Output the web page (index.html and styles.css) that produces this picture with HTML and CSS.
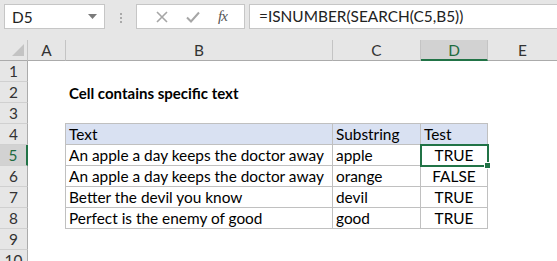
FILE: index.html
```html
<!DOCTYPE html>
<html lang="en">
<head>
  <meta charset="UTF-8">
  <title>Cell contains specific text</title>
  <link rel="stylesheet" href="styles.css">
</head>
<body>

<div class="formula-bar">
  <div class="name-box">
    <span>D5</span>
    <svg class="drop" width="9" height="5" viewBox="0 0 9 5"><path d="M0 0 H9 L4.5 5 Z" fill="#7a7a7a"/></svg>
  </div>
  <div class="grip"><i></i><i></i><i></i></div>
  <div class="fx-buttons">
    <svg width="12" height="12" viewBox="0 0 12 12"><path d="M1 1 L11 11 M11 1 L1 11" stroke="#a6a6a6" stroke-width="1.6" fill="none"/></svg>
    <svg width="14" height="12" viewBox="0 0 14 12"><path d="M1 6.5 L5 10.5 L13 1.5" stroke="#a6a6a6" stroke-width="2" fill="none"/></svg>
    <span class="fx">fx</span>
  </div>
  <div class="formula">=ISNUMBER(SEARCH(C5,B5))</div>
</div>

<div class="sheet">
  <!-- column headers -->
  <div class="corner"><span class="tri"></span></div>
  <div class="col-head">A</div>
  <div class="col-head">B</div>
  <div class="col-head">C</div>
  <div class="col-head sel">D</div>
  <div class="col-head last">E</div>

  <div class="row-head">1</div>
  <div></div><div></div><div></div><div></div><div></div>

  <div class="row-head">2</div>
  <div></div><div class="cell title">Cell contains specific text</div><div></div><div></div><div></div>

  <div class="row-head">3</div>
  <div></div><div></div><div></div><div></div><div></div>

  <div class="row-head">4</div>
  <div></div>
  <div class="cell tb th first">Text</div>
  <div class="cell tb th">Substring</div>
  <div class="cell tb th">Test</div>
  <div></div>

  <div class="row-head sel">5</div>
  <div></div>
  <div class="cell tb first">An apple a day keeps the doctor away</div>
  <div class="cell tb">apple</div>
  <div class="cell tb mid active">TRUE</div>
  <div></div>

  <div class="row-head">6</div>
  <div></div>
  <div class="cell tb first">An apple a day keeps the doctor away</div>
  <div class="cell tb">orange</div>
  <div class="cell tb mid">FALSE</div>
  <div></div>

  <div class="row-head">7</div>
  <div></div>
  <div class="cell tb first">Better the devil you know</div>
  <div class="cell tb">devil</div>
  <div class="cell tb mid">TRUE</div>
  <div></div>

  <div class="row-head">8</div>
  <div></div>
  <div class="cell tb first">Perfect is the enemy of good</div>
  <div class="cell tb">good</div>
  <div class="cell tb mid">TRUE</div>
  <div></div>

  <div class="row-head">9</div>
  <div></div><div></div><div></div><div></div><div></div>

  <div class="row-head">10</div>
  <div></div><div></div><div></div><div></div><div></div>
</div>

</body>
</html>
```

FILE: styles.css
```css
body {
  margin: 0;
  background: #fff;
  font-family: Lato, "Open Sans", sans-serif;
  font-size: 15.4px;
  color: #000;
  overflow: hidden;
}

/* formula bar */
.formula-bar {
  display: flex;
  align-items: flex-start;
  height: 40px;
  padding-top: 4px;
  box-sizing: border-box;
  background: #e6e6e6;
}

.name-box {
  display: flex;
  align-items: center;
  justify-content: space-between;
  width: 101px;
  height: 25px;
  margin-left: 4px;
  padding: 0 7px 0 7px;
  box-sizing: border-box;
  background: #fff;
  border: 1px solid #c6c6c6;
  color: #222;
}

.grip {
  display: flex;
  flex-direction: column;
  gap: 2px;
  margin: 9px 14px 0 15px;
}

.grip i {
  width: 2px;
  height: 2px;
  background: #a9a9a9;
}

.fx-buttons {
  display: flex;
  align-items: center;
  justify-content: space-around;
  width: 109px;
  height: 25px;
  padding: 0 8px 0 10px;
  box-sizing: border-box;
  background: #fff;
  border: 1px solid #c6c6c6;
}

.fx {
  font-family: "Liberation Serif", serif;
  font-style: italic;
  font-size: 15px;
  color: #555;
  letter-spacing: -1px;
}

.formula {
  flex: 1;
  height: 25px;
  margin-left: 4px;
  padding-left: 9px;
  line-height: 23px;
  box-sizing: border-box;
  background: #fff;
  border: 1px solid #c6c6c6;
  border-right: none;
  color: #222;
}

/* worksheet */
.sheet {
  display: grid;
  grid-template-columns: 28px 38px 267px 88px 67px 1fr;
  grid-template-rows: 21px;
  grid-auto-rows: 21px;
}

.corner,
.col-head {
  background: #e6e6e6;
  border-bottom: 1px solid #ababab;
  box-sizing: border-box;
}

.corner {
  position: relative;
  border-right: 1px solid #c4c4c4;
}

.tri {
  position: absolute;
  right: 3px;
  bottom: 4px;
  width: 0;
  height: 0;
  border-left: 12px solid transparent;
  border-bottom: 12px solid #c3c3c3;
}

.col-head {
  border-right: 1px solid #c4c4c4;
  text-align: center;
  line-height: 21px;
  color: #333;
}

.col-head.last {
  border-right: none;
}

.col-head.sel {
  background: #d2d2d2;
  border-bottom: 2px solid #217346;
  color: #1e6b3f;
}

.row-head {
  background: #e6e6e6;
  border-right: 1px solid #ababab;
  border-bottom: 1px solid #d0d0d0;
  box-sizing: border-box;
  text-align: center;
  line-height: 21px;
  color: #333;
}

.row-head.sel {
  background: #d2d2d2;
  border-right: 2px solid #217346;
  color: #1e6b3f;
}

.cell {
  padding: 0 3px;
  line-height: 21px;
  white-space: nowrap;
  box-sizing: border-box;
}

.title {
  font-weight: bold;
  font-size: 15px;
  padding-top: 1px;
}

/* bordered table B4:D8 */
.tb {
  border-right: 1px solid #c0c0c0;
  border-bottom: 1px solid #c0c0c0;
  line-height: 20px;
}

.tb.first {
  border-left: 1px solid #c0c0c0;
  margin-left: -1px;
}

.th {
  background: #d9e1f2;
  border-top: 1px solid #c0c0c0;
  margin-top: -1px;
}

.mid {
  text-align: center;
}

.active {
  position: relative;
  outline: 2px solid #217346;
  outline-offset: -1px;
}

.active::after {
  content: "";
  position: absolute;
  right: -4px;
  bottom: -4px;
  width: 5px;
  height: 5px;
  background: #217346;
  border: 1px solid #fff;
}
```
